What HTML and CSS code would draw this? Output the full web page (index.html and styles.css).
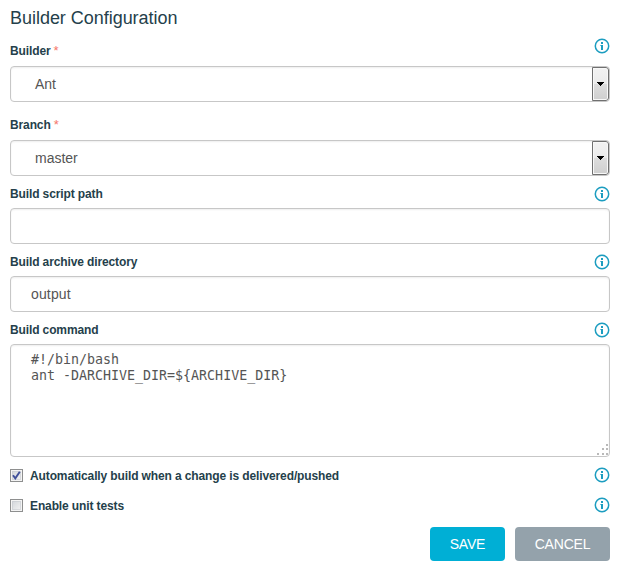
FILE: index.html
```html
<!DOCTYPE html>
<html lang="en">
<head>
<meta charset="utf-8">
<title>Builder Configuration</title>
<link rel="stylesheet" href="styles.css">
</head>
<body>
<svg class="defs" width="0" height="0" aria-hidden="true">
  <symbol id="info" viewBox="0 0 16 16">
    <circle cx="8" cy="8" r="6.7" fill="none" stroke="#1c9dc0" stroke-width="1.5"/>
    <path fill="#1c9dc0" d="M7 4h2v2H7zM6.4 7H9v5H7V8h-.6z"/>
  </symbol>
</svg>
<form class="config">
  <h1 class="title">Builder Configuration</h1>
  <div class="head head-builder"><label class="label">Builder<span class="required">*</span></label><svg class="info"><use href="#info"/></svg></div>
  <div class="control select"><span class="value">Ant</span><span class="drop"><svg width="7" height="4" viewBox="0 0 7 4"><path d="M0 0h7v1H6v1H5v1H4v1H3V3H2V2H1V1H0z"/></svg></span></div>
  <div class="head head-branch"><label class="label">Branch<span class="required">*</span></label></div>
  <div class="control select"><span class="value">master</span><span class="drop"><svg width="7" height="4" viewBox="0 0 7 4"><path d="M0 0h7v1H6v1H5v1H4v1H3V3H2V2H1V1H0z"/></svg></span></div>
  <div class="head"><label class="label">Build script path</label><svg class="info"><use href="#info"/></svg></div>
  <div class="control"></div>
  <div class="head"><label class="label">Build archive directory</label><svg class="info"><use href="#info"/></svg></div>
  <div class="control output">output</div>
  <div class="head"><label class="label">Build command</label><svg class="info"><use href="#info"/></svg></div>
  <div class="control command"><pre class="code">#!/bin/bash
ant -DARCHIVE_DIR=${ARCHIVE_DIR}</pre><svg class="grip" width="12" height="12" viewBox="0 0 12 12"><path fill="#b9b9b9" d="M9 0h2v2H9zM5 4h2v2H5zM9 4h2v2H9zM0 9h2v2H0zM5 9h2v2H5zM9 9h2v2H9z"/></svg></div>
  <div class="option option-first"><span class="check"><svg width="9" height="9" viewBox="0 0 9 9"><path d="M1 4.2L3.3 7.4L7.8 .8" fill="none" stroke="#40509a" stroke-width="1.9"/></svg></span><label class="label">Automatically build when a change is delivered/pushed</label><svg class="info"><use href="#info"/></svg></div>
  <div class="option"><span class="check"></span><label class="label">Enable unit tests</label><svg class="info"><use href="#info"/></svg></div>
  <div class="actions"><button type="button" class="button save">SAVE</button><button type="button" class="button cancel">CANCEL</button></div>
</form>
</body>
</html>
```
FILE: styles.css
```css
* { box-sizing: border-box; }
body {
  margin: 0;
  background: #fff;
  color: #253f4b;
  font-family: "Liberation Sans", Arial, sans-serif;
}
.defs { position: absolute; }
.config { width: 600px; margin-left: 10px; }
.title {
  height: 34px;
  margin: 0;
  padding-top: 7px;
  font-size: 18px;
  font-weight: 400;
  line-height: 22px;
  letter-spacing: -0.03px;
  white-space: nowrap;
}
.head {
  display: flex;
  justify-content: space-between;
  align-items: flex-start;
  height: 32px;
  padding-top: 10px;
}
.head-builder { padding-top: 4px; }
.head-builder .label { margin-top: 5px; }
.head-branch { height: 38px; padding-top: 15px; }
.label {
  font-size: 12px;
  font-weight: 700;
  line-height: 16px;
  letter-spacing: -0.12px;
  white-space: nowrap;
}
.required { margin-left: 3px; color: #f5766a; font-size: 13px; font-weight: 400; line-height: 1; }
.info { flex: none; width: 16px; height: 16px; }
.control {
  display: flex;
  height: 36px;
  border: 1px solid #c7c7c7;
  border-radius: 4px;
  box-shadow: inset 0 1px 2px #00000012;
  color: #555;
  font-size: 14px;
  line-height: 34px;
}
.select { justify-content: space-between; overflow: hidden; }
.value { padding-left: 24px; }
.output { padding-left: 20px; letter-spacing: 0.15px; }
.drop {
  display: flex;
  align-items: center;
  justify-content: center;
  width: 17px;
  border: 1px solid #707070;
  border-radius: 0 3px 3px 0;
  background: linear-gradient(#f2f2f2, #ebebeb 50%, #dddddd 50%, #cfcfcf);
  box-shadow: inset 0 0 0 1px #f8f8f8;
}
.command {
  justify-content: space-between;
  align-items: flex-end;
  height: 113px;
  padding-left: 20px;
}
.code {
  align-self: flex-start;
  margin: 7px 0 0;
  font-family: "DejaVu Sans Mono", monospace;
  font-size: 13.3px;
  line-height: 16px;
}
.grip { margin: 0 0 0 auto; }
.option { display: flex; align-items: center; height: 30px; }
.option-first { margin-top: 3px; }
.option .info { margin-left: auto; }
.option .label { padding-top: 1px; }
.check {
  display: flex;
  align-items: center;
  justify-content: center;
  width: 13px;
  height: 13px;
  margin-right: 7px;
  border: 1px solid #8e8f8f;
  background: linear-gradient(135deg, #cfd3d8, #f6f6f6);
  box-shadow: inset 0 0 0 1px #f4f4f4, inset 0 0 0 2px #c5c9ce88;
}
.actions { display: flex; justify-content: flex-end; gap: 10px; margin-top: 7px; }
.button {
  height: 34px;
  padding: 0;
  border: 0;
  border-radius: 4px;
  color: #fff;
  font-family: inherit;
  font-size: 14px;
  letter-spacing: -0.2px;
}
.save { width: 75px; background: #00afd5; }
.cancel { width: 95px; background: #94a2ab; }
```
